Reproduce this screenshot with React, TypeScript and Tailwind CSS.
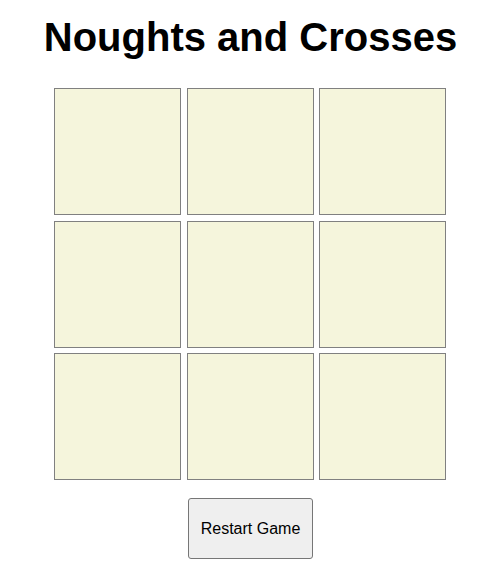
import { useState } from "react";

type Cell = "X" | "O" | null;

export default function App() {
  const [board, setBoard] = useState<Cell[]>(Array(9).fill(null));
  const [turn, setTurn] = useState<"X" | "O">("X");

  const play = (i: number) => {
    if (board[i]) return;
    const next = [...board];
    next[i] = turn;
    setBoard(next);
    setTurn(turn === "X" ? "O" : "X");
  };

  const restart = () => {
    setBoard(Array(9).fill(null));
    setTurn("X");
  };

  return (
    <div className="flex flex-col items-center bg-white font-['Liberation_Sans',Arial,sans-serif] text-black">
      <h1 className="mt-[14px] text-[40px] font-bold leading-[46px]">
        Noughts and Crosses
      </h1>

      <div className="mt-[28px] mr-[1px] grid grid-cols-[repeat(3,127px)] gap-[5.5px]">
        {board.map((cell, i) => (
          <div
            key={i}
            onClick={() => play(i)}
            className="flex h-[127px] w-[127px] cursor-pointer items-center justify-center border border-[#808080] bg-[#f5f5dc] text-[64px] font-bold"
          >
            {cell}
          </div>
        ))}
      </div>

      <button
        onClick={restart}
        className="mt-[18px] h-[61px] w-[125px] rounded-[3px] border border-[#767676] bg-[#efefef] text-[16px] leading-[18px] text-black"
      >
        Restart Game
      </button>
    </div>
  );
}
